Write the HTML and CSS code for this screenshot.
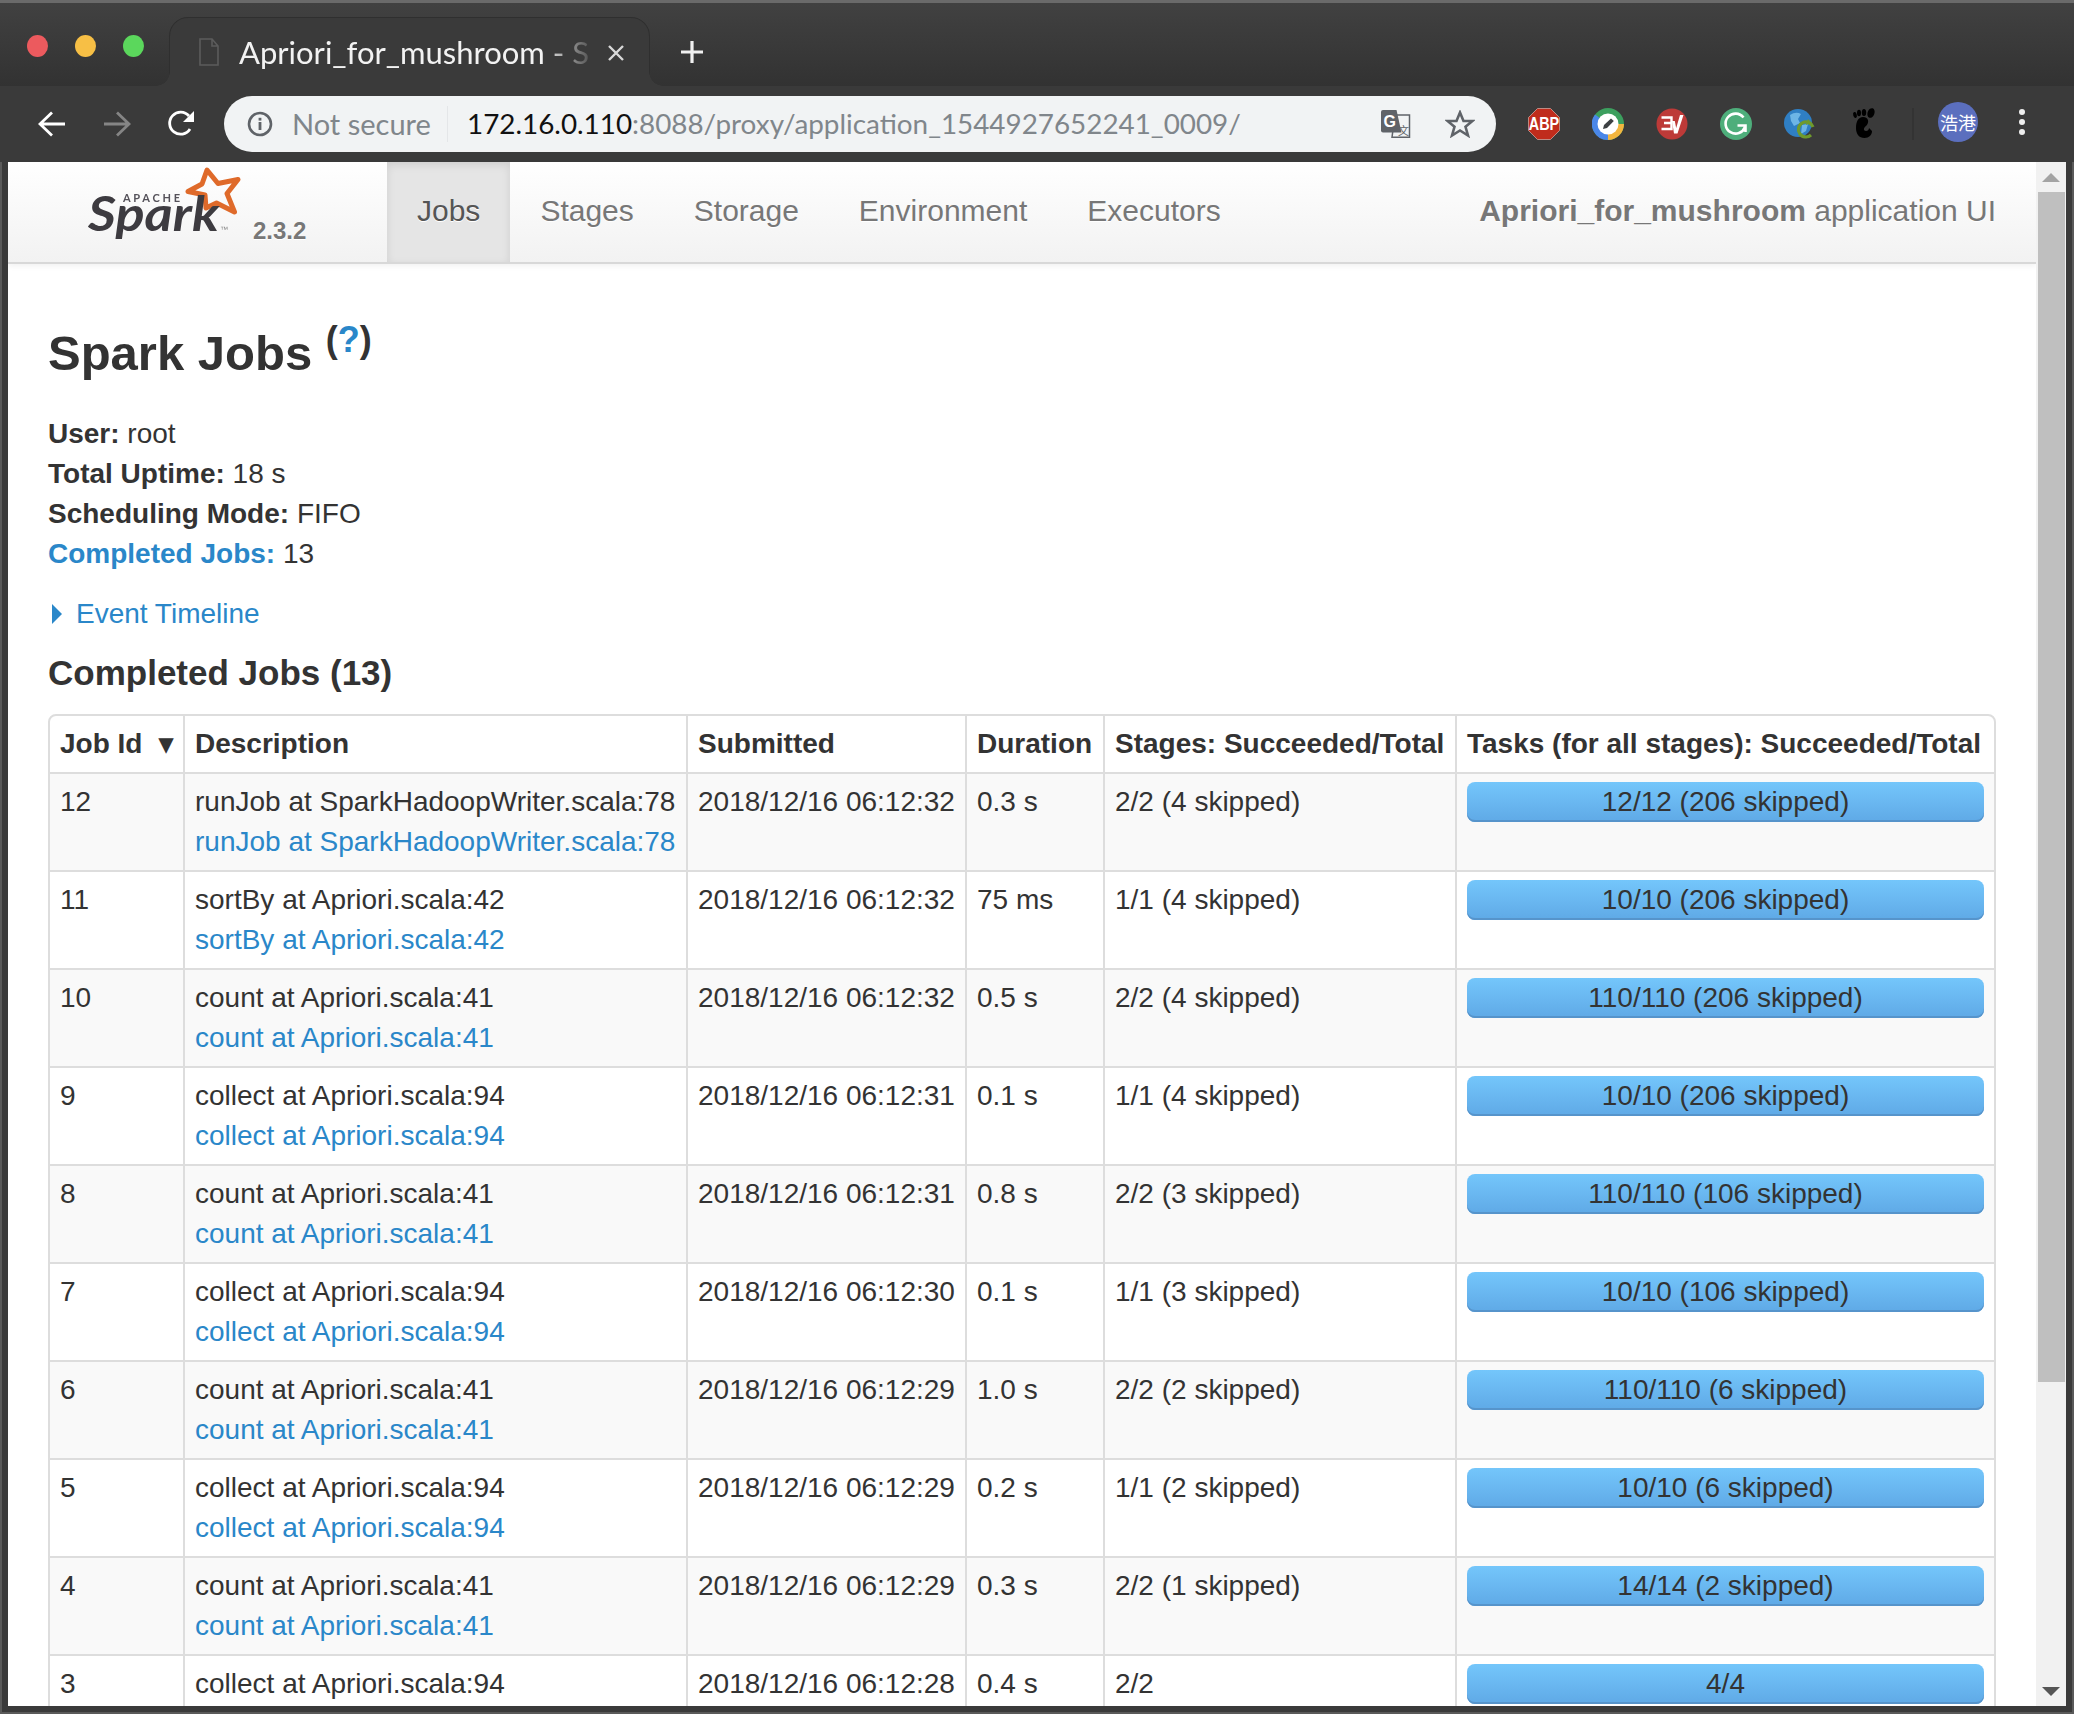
FILE: index.html
```html
<!DOCTYPE html>
<html lang="en">
<head>
<meta charset="utf-8">
<title>Apriori_for_mushroom - Spark Jobs</title>
<link rel="stylesheet" href="styles.css">
</head>
<body>
<header class="titlebar">
  <div class="lights"><span class="light red"></span><span class="light yellow"></span><span class="light green"></span></div>
  <div class="tab">
    <svg class="doc-icon" width="20" height="28" viewBox="0 0 20 28"><path d="M1 1H13L19 8V27H1Z M13 1V8H19" fill="none" stroke="#5c5c5c" stroke-width="1.6"/></svg>
    <span class="tab-title">Apriori_for_mushroom - S</span>
    <svg class="tab-close" width="18" height="16" viewBox="0 0 18 16"><path d="M2 1L16 15M16 1L2 15" stroke="#d8d8d8" stroke-width="2.4"/></svg>
  </div>
  <svg class="new-tab" width="24" height="24" viewBox="0 0 24 24"><path d="M12 1V23M1 12H23" stroke="#f0f0f0" stroke-width="3.2"/></svg>
</header>
<div class="toolbar">
  <svg class="btn-back" width="28" height="26" viewBox="0 0 28 26"><path d="M27 13H3M14 1.500L2 13L14 24.500" fill="none" stroke="#fff" stroke-width="2.800"/></svg>
  <svg class="btn-forward" width="28" height="26" viewBox="0 0 28 26"><path d="M1 13H25M14 1.500L26 13L14 24.500" fill="none" stroke="#858585" stroke-width="2.800"/></svg>
  <svg class="btn-reload" width="28" height="28" viewBox="0 0 28 28"><path d="M23 19A11 11 0 1 1 22 6" fill="none" stroke="#fff" stroke-width="2.800"/><path d="M27 1V12H16Z" fill="#fff"/></svg>
  <div class="omnibox">
    <svg class="info-icon" width="26" height="26" viewBox="0 0 26 26"><circle cx="13" cy="13" r="11" fill="none" stroke="#5f6368" stroke-width="2.600"/><rect x="11.600" y="11" width="2.800" height="8" fill="#5f6368"/><rect x="11.600" y="6.800" width="2.800" height="2.800" fill="#5f6368"/></svg>
    <span class="not-secure">Not secure</span>
    <span class="omni-sep"></span>
    <span class="url"><span class="url-host">172.16.0.110</span>:8088/proxy/application_1544927652241_0009/</span>
    <svg class="translate-icon" width="30" height="28" viewBox="0 0 30 28"><path d="M14 5H28.500V27.200H11Z" fill="#f1f3f4" stroke="#5f6368" stroke-width="1.500"/><path d="M2 0H15.500L20.500 22.500H2Q0 22.500 0 20.500V2Q0 0 2 0Z" fill="#5f6368"/><text class="tr-g" x="2.500" y="17">G</text><text class="tr-z" x="17" y="24.500">文</text></svg>
    <svg class="star-icon" width="30" height="28" viewBox="0 0 30 28"><path d="M15 2.500L18.500 11H27.500L20.500 16.800L23 25.500L15 20.500L7 25.500L9.500 16.800L2.500 11H11.500Z" fill="none" stroke="#5f6368" stroke-width="2.600"/></svg>
  </div>
  <svg class="ext first-ext" width="32" height="32" viewBox="0 0 32 32"><path d="M9.500 0.500H22.500L31.500 9.500V22.500L22.500 31.500H9.500L0.500 22.500V9.500Z" fill="#c02c1c" stroke="#d8b0a8" stroke-width="0.700"/><text class="abp" transform="translate(16 22) scale(.8 1)">ABP</text></svg>
  <svg class="ext" width="32" height="32" viewBox="0 0 32 32"><circle cx="16" cy="16" r="16" fill="#3c9f5e"/><path d="M16 32A16 16 0 0 1 3 6.500L16 16Z" fill="#4a86e8"/><path d="M16 32A16 16 0 0 0 32 16L16 16Z" fill="#f3b63f"/><circle cx="16" cy="16" r="10.500" fill="#fff"/><path d="M11 21L12 17L19 10.500L21.800 13L15 20Z" fill="#3c4043"/></svg>
  <svg class="ext" width="32" height="32" viewBox="0 0 32 32"><circle cx="16" cy="16" r="15.500" fill="#bd3a38"/><path d="M5.500 9.500H15.500V21H5.500M8 15H15.500" stroke="#fff" stroke-width="2.400" fill="none"/><path d="M16 13H18.800L20.200 20L24 7H27.500L21.500 25.500H18Z" fill="#fff"/></svg>
  <svg class="ext" width="32" height="32" viewBox="0 0 32 32"><circle cx="16" cy="16" r="16" fill="#4eae7b"/><path d="M23.500 9.500A10 10 0 1 0 25 19M17.500 17.500H25.500V24" fill="none" stroke="#fff" stroke-width="2.600"/></svg>
  <svg class="ext" width="32" height="32" viewBox="0 0 32 32"><circle cx="14" cy="15" r="14" fill="#2f7fc4"/><path d="M6 7Q12 3 17 6L14 11L16 15L10 18L7 13ZM18 17L24 16L22 23L17 26Z" fill="#6db5e6"/><path d="M29 19A7.500 7.500 0 1 0 27 27" fill="none" stroke="#6f9a2c" stroke-width="3.200"/><path d="M24 11L28 15L22 17Z" fill="#6f9a2c"/></svg>
  <svg class="ext" width="32" height="32" viewBox="0 0 32 32"><g fill="#000"><ellipse cx="7" cy="7" rx="1.800" ry="3" transform="rotate(-15 7 7)"/><ellipse cx="11" cy="5" rx="2" ry="3.200"/><ellipse cx="16" cy="4.500" rx="2.200" ry="3.500"/><ellipse cx="23" cy="5" rx="3.400" ry="5" transform="rotate(20 23 5)"/><path d="M15 9C21 9 21.500 15 18 18C15 20 15.500 23 18 23C20 23 21 21.500 21 20L24 23C24 27 21 30 16.500 30C11 30 8 26 8 20C8 14 10 9 15 9Z"/></g></svg>
  <span class="ext-sep"></span>
  <span class="avatar">浩港</span>
  <svg class="menu-dots" width="6" height="26" viewBox="0 0 6 26"><circle cx="3" cy="3" r="3" fill="#eee"/><circle cx="3" cy="13" r="3" fill="#eee"/><circle cx="3" cy="23" r="3" fill="#eee"/></svg>
</div>
<div class="viewport">
  <div class="page">
    <nav class="navbar">
      <div class="brand">
        <svg class="logo" width="165" height="84" viewBox="80 164 165 84">
          <path class="logo-star" d="M207 170L218 183.500L238 179.500L227 193.500L234.500 212L216.500 203L206 208L205 195L188 191.500L202 184Z"/>
          <text class="logo-apache" x="123" y="202" textLength="57">APACHE</text>
          <text class="logo-spark" x="88" y="231" textLength="131" lengthAdjust="spacingAndGlyphs">Spark</text>
          <text class="logo-tm" x="220" y="232">™</text>
        </svg>
        <span class="version">2.3.2</span>
      </div>
      <ul class="nav-links">
        <li class="nav-link active">Jobs</li>
        <li class="nav-link">Stages</li>
        <li class="nav-link">Storage</li>
        <li class="nav-link">Environment</li>
        <li class="nav-link">Executors</li>
      </ul>
      <p class="app-name"><strong>Apriori_for_mushroom</strong> application UI</p>
    </nav>
    <main class="content">
      <h3 class="page-title">Spark Jobs <sup class="help">(<a href="#">?</a>)</sup></h3>
      <ul class="summary">
        <li><strong>User:</strong> root</li>
        <li><strong>Total Uptime:</strong> 18 s</li>
        <li><strong>Scheduling Mode:</strong> FIFO</li>
        <li><a href="#"><strong>Completed Jobs:</strong></a> 13</li>
      </ul>
      <p class="timeline"><span class="arrow-right"></span><a href="#">Event Timeline</a></p>
      <h4 class="section-title">Completed Jobs (13)</h4>
      <table class="jobs">
        <colgroup><col class="c-id"><col class="c-desc"><col class="c-sub"><col class="c-dur"><col class="c-stages"><col class="c-tasks"></colgroup>
        <thead>
          <tr><th>Job Id <span class="sort">▾</span></th><th>Description</th><th>Submitted</th><th>Duration</th><th>Stages: Succeeded/Total</th><th>Tasks (for all stages): Succeeded/Total</th></tr>
        </thead>
        <tbody>
          <tr><td>12</td><td>runJob at SparkHadoopWriter.scala:78<br><a href="#">runJob at SparkHadoopWriter.scala:78</a></td><td>2018/12/16 06:12:32</td><td>0.3 s</td><td>2/2 (4 skipped)</td><td><div class="progress">12/12 (206 skipped)</div></td></tr>
          <tr><td>11</td><td>sortBy at Apriori.scala:42<br><a href="#">sortBy at Apriori.scala:42</a></td><td>2018/12/16 06:12:32</td><td>75 ms</td><td>1/1 (4 skipped)</td><td><div class="progress">10/10 (206 skipped)</div></td></tr>
          <tr><td>10</td><td>count at Apriori.scala:41<br><a href="#">count at Apriori.scala:41</a></td><td>2018/12/16 06:12:32</td><td>0.5 s</td><td>2/2 (4 skipped)</td><td><div class="progress">110/110 (206 skipped)</div></td></tr>
          <tr><td>9</td><td>collect at Apriori.scala:94<br><a href="#">collect at Apriori.scala:94</a></td><td>2018/12/16 06:12:31</td><td>0.1 s</td><td>1/1 (4 skipped)</td><td><div class="progress">10/10 (206 skipped)</div></td></tr>
          <tr><td>8</td><td>count at Apriori.scala:41<br><a href="#">count at Apriori.scala:41</a></td><td>2018/12/16 06:12:31</td><td>0.8 s</td><td>2/2 (3 skipped)</td><td><div class="progress">110/110 (106 skipped)</div></td></tr>
          <tr><td>7</td><td>collect at Apriori.scala:94<br><a href="#">collect at Apriori.scala:94</a></td><td>2018/12/16 06:12:30</td><td>0.1 s</td><td>1/1 (3 skipped)</td><td><div class="progress">10/10 (106 skipped)</div></td></tr>
          <tr><td>6</td><td>count at Apriori.scala:41<br><a href="#">count at Apriori.scala:41</a></td><td>2018/12/16 06:12:29</td><td>1.0 s</td><td>2/2 (2 skipped)</td><td><div class="progress">110/110 (6 skipped)</div></td></tr>
          <tr><td>5</td><td>collect at Apriori.scala:94<br><a href="#">collect at Apriori.scala:94</a></td><td>2018/12/16 06:12:29</td><td>0.2 s</td><td>1/1 (2 skipped)</td><td><div class="progress">10/10 (6 skipped)</div></td></tr>
          <tr><td>4</td><td>count at Apriori.scala:41<br><a href="#">count at Apriori.scala:41</a></td><td>2018/12/16 06:12:29</td><td>0.3 s</td><td>2/2 (1 skipped)</td><td><div class="progress">14/14 (2 skipped)</div></td></tr>
          <tr><td>3</td><td>collect at Apriori.scala:94<br><a href="#">collect at Apriori.scala:94</a></td><td>2018/12/16 06:12:28</td><td>0.4 s</td><td>2/2</td><td><div class="progress">4/4</div></td></tr>
        </tbody>
      </table>
    </main>
  </div>
  <div class="scrollbar">
    <span class="sb-btn"><span class="sb-up"></span></span>
    <span class="sb-thumb"></span>
    <span class="sb-track"></span>
    <span class="sb-btn"><span class="sb-down"></span></span>
  </div>
</div>
</body>
</html>
```
FILE: styles.css
```css
* { box-sizing: border-box; }
html, body { margin: 0; height: 100%; }
body {
  height: 1714px;
  overflow: hidden;
  background: #3a3a3a;
  box-shadow: inset 0 3px 0 #6a6a6a, inset 2px 0 0 #5a5a5a, inset -2px 0 0 #5a5a5a, inset 0 -2px 0 #5a5a5a;
  font-family: "Liberation Sans", Arial, sans-serif;
  font-size: 28px;
  line-height: 40px;
  color: #333;
}

/* Browser chrome */
.titlebar {
  height: 86px;
  display: flex;
  align-items: flex-end;
  padding-left: 27px;
  background: linear-gradient(#414141, #323232);
  border-top: 3px solid #6a6a6a;
}
.lights { display: flex; gap: 27px; align-self: flex-start; margin-top: 32px; }
.light { width: 21px; height: 22px; border-radius: 50%; }
.red { background: #ec5a5e; }
.yellow { background: #f7bf45; }
.green { background: #5bd75c; }
.tab {
  position: relative;
  width: 479px;
  height: 68px;
  margin-left: 26px;
  padding: 17px 22px 0 29px;
  display: flex;
  align-items: flex-start;
  background: #3a3a3a;
  border-radius: 18px 18px 0 0;
  box-shadow: 0 -1px 0 #2f2f2f, 1px 0 0 #2f2f2f, -1px 0 0 #2f2f2f;
}
.tab::before, .tab::after {
  content: "";
  position: absolute;
  bottom: 0;
  width: 14px;
  height: 14px;
}
.tab::before { left: -14px; background: radial-gradient(circle at 0 0, transparent 13.5px, #3a3a3a 14px); }
.tab::after { right: -14px; background: radial-gradient(circle at 100% 0, transparent 13.5px, #3a3a3a 14px); }
.doc-icon { flex: none; margin-top: 3px; }
.tab-title {
  margin: -3px 0 0 20px;
  width: 352px;
  flex: none;
  white-space: nowrap;
  font-family: Lato, "Noto Sans", sans-serif;
  font-size: 31px;
  line-height: 40px;
  color: #f2f2f2;
  -webkit-mask-image: linear-gradient(90deg, #000 86%, rgba(0,0,0,.12) 100%);
  mask-image: linear-gradient(90deg, #000 86%, rgba(0,0,0,.12) 100%);
}
.tab-close { flex: none; margin: 10px 0 0 16px; }
.new-tab { margin: 0 0 22px 31px; }

.toolbar {
  height: 76px;
  display: flex;
  align-items: center;
  padding-left: 38px;
  background: #3a3a3a;
}
.btn-forward { margin-left: 37px; }
.btn-reload { margin-left: 36px; }
.omnibox {
  width: 1272px;
  height: 56px;
  margin-left: 29px;
  padding: 0 21px 0 23px;
  display: flex;
  align-items: center;
  background: #f1f3f4;
  border-radius: 28px;
  font-family: Lato, "Noto Sans", sans-serif;
  font-size: 28px;
  color: #80868b;
  white-space: nowrap;
}
.not-secure { margin-left: 19px; width: 138px; font-size: 29px; }
.omni-sep { width: 1px; height: 36px; margin-left: 17px; background: #e4e6e8; }
.url { margin-left: 19px; font-size: 27.85px; }
.url-host { color: #111; }
.translate-icon { margin-left: auto; }
.star-icon { margin-left: 34px; }
.tr-g { font: bold 16px "Liberation Sans", sans-serif; fill: #fff; }
.tr-z { font: 11px "Noto Sans CJK SC", sans-serif; fill: #5f6368; }
.ext { flex: none; margin-left: 32px; }
.abp { font: bold 18px "Liberation Sans", sans-serif; fill: #fff; text-anchor: middle; }
.ext-sep { width: 2px; height: 32px; margin-left: 32px; background: #333; }
.avatar {
  width: 40px;
  height: 40px;
  margin: 0 0 4px 24px;
  border-radius: 50%;
  background: #5b6fbe;
  color: #fff;
  font-family: "Noto Sans CJK SC", sans-serif;
  font-size: 18px;
  line-height: 40px;
  text-align: center;
  white-space: nowrap;
}
.menu-dots { margin: 0 0 4px 41px; }

/* Viewport */
.viewport {
  height: 1544px;
  margin: 0 8px;
  display: flex;
  overflow: hidden;
  background: #fff;
}
.page { flex: 1; min-width: 0; }

.navbar {
  height: 102px;
  display: flex;
  background: linear-gradient(#fff, #f2f2f2);
  border-bottom: 2px solid #d8d8d8;
  box-shadow: 0 2px 6px rgba(0,0,0,.06);
  font-size: 30px;
}
.brand { width: 379px; flex: none; position: relative; display: flex; }
.logo { margin: 2px 0 0 72px; flex: none; filter: blur(.4px); }
.logo-star { fill: none; stroke: #df6a2a; stroke-width: 5; stroke-linejoin: round; }
.logo-apache { font: bold 11px Lato, sans-serif; fill: #55525a; }
.logo-spark { font: bold italic 47px Lato, sans-serif; fill: #3d3b40; }
.logo-tm { font: 8px "Liberation Sans", sans-serif; fill: #888; }
.version { margin: 54px 0 0 8px; font-size: 24px; font-weight: bold; line-height: 30px; color: #777; text-shadow: 0 1px 0 #fff; }
.nav-links { display: flex; margin: 0; padding: 0; list-style: none; }
.nav-link { padding: 29px 30px; color: #777; text-shadow: 0 1px 0 #fff; }
.nav-link.active { color: #555; background: #e5e5e5; box-shadow: inset 0 3px 8px rgba(0,0,0,.1); }
.app-name { margin: 29px 40px 0 auto; color: #777; text-shadow: 0 1px 0 #fff; }

.content { padding: 0 40px; }
a { color: #2a87c9; text-decoration: none; }
.page-title { margin: 49px 0 0; font-size: 49px; line-height: 80px; font-weight: bold; }
.help { font-size: 36px; line-height: 0; vertical-align: baseline; position: relative; top: -18px; }
.summary { margin: 21px 0 0; padding: 0; list-style: none; }
.timeline { margin: 20px 0 0; display: flex; align-items: center; }
.arrow-right { width: 0; height: 0; margin: 0 14px 0 4px; border-left: 10px solid #2a87c9; border-top: 10px solid transparent; border-bottom: 10px solid transparent; }
.section-title { margin: 19px 0 0; font-size: 35px; line-height: 40px; font-weight: bold; }

.jobs {
  width: 1948px;
  margin-top: 21px;
  table-layout: fixed;
  border: 2px solid #ddd;
  border-collapse: separate;
  border-spacing: 0;
  border-radius: 8px;
}
.c-id { width: 133px; }
.c-desc { width: 503px; }
.c-sub { width: 279px; }
.c-dur { width: 138px; }
.c-stages { width: 352px; }
.c-tasks { width: 539px; }
.jobs th, .jobs td {
  padding: 8px 10px;
  border-left: 2px solid #ddd;
  text-align: left;
  vertical-align: top;
  white-space: nowrap;
}
.jobs th:first-child, .jobs td:first-child { border-left: 0; }
.jobs td { border-top: 2px solid #ddd; }
.jobs tbody tr:nth-child(odd) td { background: #f9f9f9; }
.sort { font-size: 28px; margin-left: 9px; }
.progress {
  height: 40px;
  text-align: center;
  border-radius: 8px;
  background: linear-gradient(#74c6fb, #5fa9e6);
  box-shadow: inset 0 -2px 0 #5694cb;
}

.scrollbar { width: 30px; flex: none; display: flex; flex-direction: column; background: #f1f1f1; }
.sb-btn { height: 30px; flex: none; display: flex; align-items: center; justify-content: center; }
.sb-up { border-left: 9px solid transparent; border-right: 9px solid transparent; border-bottom: 9px solid #a3a3a3; }
.sb-down { border-left: 9px solid transparent; border-right: 9px solid transparent; border-top: 9px solid #555; }
.sb-thumb { height: 1190px; flex: none; margin: 0 1px 0 2px; background: #bfbfbf; }
.sb-track { flex: 1; }
```
